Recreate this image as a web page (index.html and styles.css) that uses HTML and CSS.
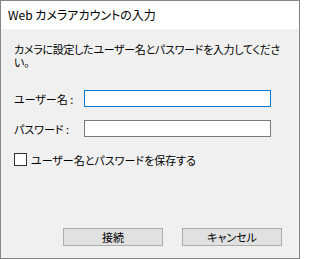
FILE: index.html
```html
<!DOCTYPE html>
<html lang="ja">
<head>
<meta charset="utf-8">
<title>Web カメラアカウントの入力</title>
<link rel="stylesheet" href="styles.css">
</head>
<body>
<div class="window">
  <div class="titlebar">Web カメラアカウントの入力</div>
  <div class="content">
    <p class="intro">カメラに設定したユーザー名とパスワードを入力してください。</p>
    <div class="field first">
      <label class="label" for="user">ユーザー名 :</label>
      <input class="text focused" id="user" type="text">
    </div>
    <div class="field">
      <label class="label" for="pass">パスワード :</label>
      <input class="text" id="pass" type="password">
    </div>
    <label class="check">
      <input class="box" type="checkbox">
      <span>ユーザー名とパスワードを保存する</span>
    </label>
    <div class="buttons">
      <button class="btn" type="button">接続</button>
      <button class="btn" type="button">キャンセル</button>
    </div>
  </div>
</div>
</body>
</html>
```
FILE: styles.css
```css
html, body {
  margin: 0;
  padding: 0;
  background: #ffffff;
}
body {
  font-family: "Noto Sans CJK JP", "Noto Sans", sans-serif;
  font-size: 11px;
  color: #000000;
  font-feature-settings: "palt";
}
.window {
  width: 300px;
  height: 259px;
  box-sizing: border-box;
  border: 1px solid #858585;
  display: flex;
  flex-direction: column;
}
.titlebar {
  height: 28px;
  background: #ffffff;
  padding-left: 7px;
  line-height: 28px;
  font-size: 12px;
  flex: none;
}
.content {
  flex: 1;
  background: #f0f0f0;
  padding: 14px 0 12px 13px;
  display: flex;
  flex-direction: column;
}
.intro {
  margin: 0;
  width: 272px;
  line-height: 13px;
  letter-spacing: -0.3px;
}
.field {
  display: flex;
  align-items: center;
  margin-top: 13px;
}
.field.first {
  margin-top: 21px;
}
.label {
  width: 70px;
  flex: none;
}
.text {
  width: 187px;
  height: 17px;
  box-sizing: border-box;
  margin: 0;
  padding: 0 2px;
  border: 1px solid #7a7a7a;
  background: #ffffff;
  outline: none;
  font: inherit;
}
.text.focused {
  border-color: #0078d7;
}
.check {
  display: flex;
  align-items: center;
  gap: 4px;
  margin-top: 16px;
  height: 13px;
}
.box {
  appearance: none;
  -webkit-appearance: none;
  width: 13px;
  height: 13px;
  margin: 0;
  box-sizing: border-box;
  border: 1px solid #333333;
  background: #ffffff;
}
.buttons {
  margin-top: auto;
  display: flex;
  gap: 19px;
  padding-left: 49px;
}
.btn {
  width: 100px;
  height: 18px;
  box-sizing: border-box;
  margin: 0;
  padding: 0;
  border: 1px solid #adadad;
  background: #e1e1e1;
  font: inherit;
  color: #000000;
  line-height: 16px;
}
```
